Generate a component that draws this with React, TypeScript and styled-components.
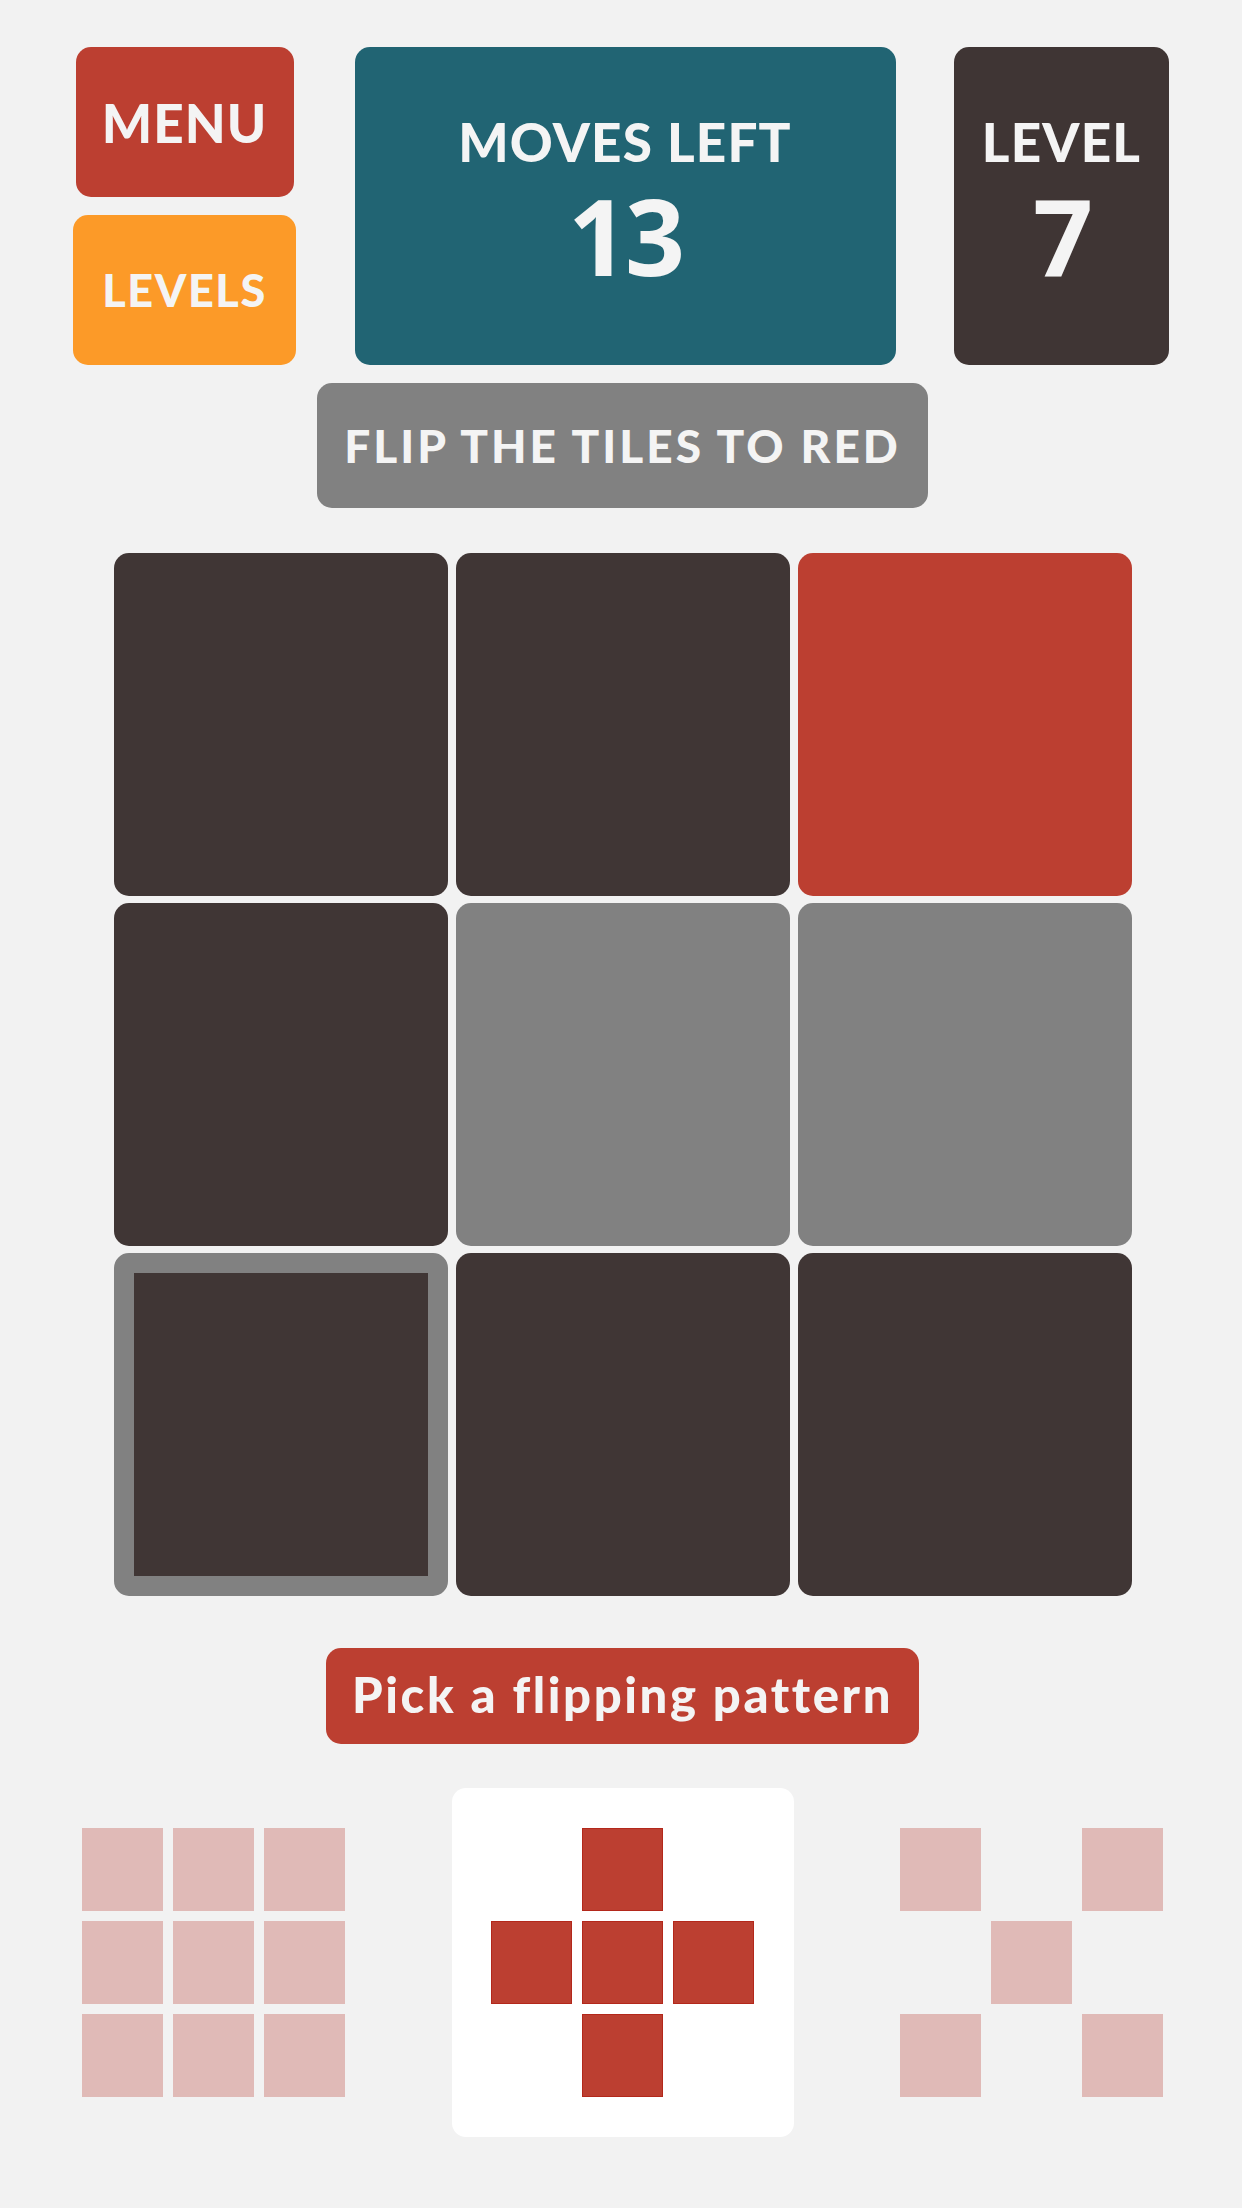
import React from "react";
import styled, { createGlobalStyle } from "styled-components";

const FONT = `Lato, "Open Sans", "Liberation Sans", Arial, sans-serif`;
const NUM_FONT = `"Open Sans", Lato, "Liberation Sans", Arial, sans-serif`;

const GlobalStyle = createGlobalStyle`
  html, body {
    margin: 0;
    padding: 0;
    background: #f2f2f2;
  }
  body {
    font-family: ${FONT};
  }
`;

const Page = styled.div`
  width: 1242px;
  min-height: 2208px;
  box-sizing: border-box;
  padding-top: 47px;
  background: #f2f2f2;
  display: flex;
  flex-direction: column;
  align-items: center;
`;

const TopBar = styled.div`
  width: 1096px;
  display: grid;
  grid-template-columns: 223px 541px 215px;
  justify-content: space-between;
`;

const SideButtons = styled.div`
  display: flex;
  flex-direction: column;
  align-items: center;
  gap: 18px;
`;

const ActionButton = styled.button<{ $bg: string; $w: number; $size: number; $track: number }>`
  width: ${(p) => p.$w}px;
  height: 150px;
  border: 0;
  padding: 0;
  border-radius: 15px;
  background: ${(p) => p.$bg};
  color: #f4f4f4;
  font-family: ${FONT};
  font-weight: 900;
  font-size: ${(p) => p.$size}px;
  letter-spacing: ${(p) => p.$track}px;
  line-height: 1;
  display: flex;
  align-items: center;
  justify-content: center;
  cursor: pointer;
`;

const StatCard = styled.div<{ $bg: string }>`
  height: 318px;
  box-sizing: border-box;
  padding-bottom: 9px;
  border-radius: 15px;
  background: ${(p) => p.$bg};
  color: #f4f4f4;
  display: flex;
  flex-direction: column;
  align-items: center;
  justify-content: center;
`;

const StatLabel = styled.div`
  font-size: 53px;
  font-weight: 900;
  letter-spacing: 1.2px;
  line-height: 1;
`;

const StatValue = styled.div`
  margin-top: 15px;
  font-family: ${NUM_FONT};
  font-size: 105px;
  font-weight: 700;
  letter-spacing: -3px;
  line-height: 1;
`;

const Lower = styled.div`
  display: flex;
  flex-direction: column;
  align-items: center;
  padding-left: 3px;
`;

const GoalBanner = styled.div`
  margin-top: 18px;
  width: 611px;
  height: 125px;
  border-radius: 15px;
  background: #818181;
  color: #f4f4f4;
  font-size: 46px;
  font-weight: 900;
  letter-spacing: 3px;
  line-height: 1;
  display: flex;
  align-items: center;
  justify-content: center;
`;

const Board = styled.div`
  margin-top: 45px;
  display: grid;
  grid-template-columns: repeat(3, 334px);
  grid-auto-rows: 343px;
  column-gap: 8px;
  row-gap: 7px;
`;

type TileState = "dark" | "red" | "gray" | "selected";

const tileColor: Record<TileState, string> = {
  dark: "#403635",
  red: "#bc3f31",
  gray: "#818181",
  selected: "#403635",
};

const Tile = styled.div<{ $state: TileState }>`
  box-sizing: border-box;
  border-radius: 15px;
  background: ${(p) => tileColor[p.$state]};
  border: ${(p) => (p.$state === "selected" ? "20px solid #818181" : "0")};
  cursor: pointer;
`;

const PickButton = styled.button`
  margin-top: 52px;
  width: 593px;
  height: 96px;
  border: 0;
  padding: 0 0 4px;
  border-radius: 15px;
  background: #bc3f31;
  color: #f4f4f4;
  font-family: ${FONT};
  font-weight: 900;
  font-size: 49px;
  letter-spacing: 2.6px;
  line-height: 1;
  display: flex;
  align-items: center;
  justify-content: center;
  cursor: pointer;
`;

const PatternRow = styled.div`
  margin-top: 44px;
  display: flex;
  gap: 67px;
`;

const PatternCard = styled.div<{ $active: boolean }>`
  width: 342px;
  height: 349px;
  border-radius: 14px;
  background: ${(p) => (p.$active ? "#ffffff" : "transparent")};
  display: flex;
  align-items: center;
  justify-content: center;
  cursor: pointer;
`;

const PatternGrid = styled.div`
  display: grid;
  grid-template-columns: repeat(3, 81px);
  grid-auto-rows: 83px;
  gap: 10px;
`;

const PatternCell = styled.div<{ $on: boolean; $active: boolean }>`
  box-sizing: border-box;
  background: ${(p) => (!p.$on ? "transparent" : p.$active ? "#bc3f31" : "#e0bab7")};
  border: ${(p) => (p.$on && p.$active ? "1px solid #b3281b" : "0")};
`;

const board: TileState[] = [
  "dark", "dark", "red",
  "dark", "gray", "gray",
  "selected", "dark", "dark",
];

const patterns: { cells: number[]; active: boolean }[] = [
  { cells: [1, 1, 1, 1, 1, 1, 1, 1, 1], active: false },
  { cells: [0, 1, 0, 1, 1, 1, 0, 1, 0], active: true },
  { cells: [1, 0, 1, 0, 1, 0, 1, 0, 1], active: false },
];

export default function App() {
  return (
    <>
      <GlobalStyle />
      <Page>
        <TopBar>
          <SideButtons>
            <ActionButton $bg="#bc3f31" $w={218} $size={53} $track={1}>MENU</ActionButton>
            <ActionButton $bg="#fc9a28" $w={223} $size={45} $track={1.6}>LEVELS</ActionButton>
          </SideButtons>
          <StatCard $bg="#216473">
            <StatLabel>MOVES LEFT</StatLabel>
            <StatValue>13</StatValue>
          </StatCard>
          <StatCard $bg="#3f3534">
            <StatLabel>LEVEL</StatLabel>
            <StatValue>7</StatValue>
          </StatCard>
        </TopBar>
        <Lower>
          <GoalBanner>FLIP THE TILES TO RED</GoalBanner>
          <Board>
            {board.map((s, i) => (
              <Tile key={i} $state={s} />
            ))}
          </Board>
          <PickButton>Pick a flipping pattern</PickButton>
          <PatternRow>
            {patterns.map((p, i) => (
              <PatternCard key={i} $active={p.active}>
                <PatternGrid>
                  {p.cells.map((c, j) => (
                    <PatternCell key={j} $on={c === 1} $active={p.active} />
                  ))}
                </PatternGrid>
              </PatternCard>
            ))}
          </PatternRow>
        </Lower>
      </Page>
    </>
  );
}
